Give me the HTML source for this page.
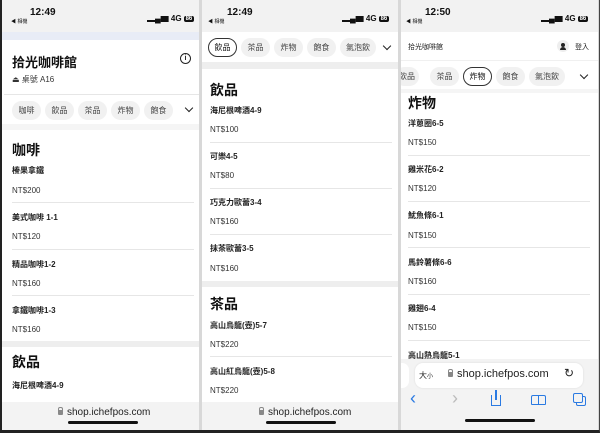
<!DOCTYPE html><html><head><meta charset="utf-8"><style>
*{margin:0;padding:0;box-sizing:border-box}
body{width:600px;height:433px;background:#d8d8d8;position:relative;overflow:hidden;font-family:"Liberation Sans","Noto Sans CJK TC",sans-serif;color:#222}
.frame{position:absolute;left:0;top:0;width:600px;height:433px;border-left:2px solid #222;border-bottom:3px solid #222;border-right:1px solid #444;pointer-events:none}
.p{position:absolute;top:0;height:430px;background:#fff;overflow:hidden}
.a{position:absolute;white-space:nowrap}
.sb{position:absolute;left:0;top:0;width:100%;height:32px;background:#f2f2f2}
.tm{position:absolute;top:7px;font-size:10px;font-weight:bold;color:#111}
.bk{position:absolute;top:18px;font-size:5px;color:#111}
.sig{position:absolute;top:13px;font-size:8px;font-weight:bold;color:#111}
.bat{display:inline-block;background:#111;color:#fff;font-size:6px;border-radius:2px;padding:0 2px;margin-left:2px;vertical-align:1px}
.h{font-size:14px;font-weight:bold;color:#111}
.n{font-size:8px;font-weight:bold;color:#222}
.pr{font-size:8px;color:#333}
.ln{position:absolute;height:1px;background:#e6e6e6}
.band{position:absolute;left:0;width:100%;background:#eeeeee}
.chip{position:absolute;height:19px;border-radius:10px;background:#f1f1f1;font-size:8px;color:#444;text-align:center;line-height:19px}
.chip.s{background:#fff;border:1px solid #333;line-height:17px;color:#111}
.bb{position:absolute;left:0;width:100%;background:#f3f3f3}
.url{position:absolute;font-size:10px;color:#222}
.lk{display:inline-block;width:5px;height:5px;background:#888;border-radius:1px;margin-right:4px;position:relative;vertical-align:0}
.lk:before{content:"";position:absolute;left:1px;top:-3px;width:3px;height:3px;border:1px solid #888;border-bottom:none;border-radius:2px 2px 0 0;box-sizing:content-box;left:0}
.hi{position:absolute;height:3px;background:#111;border-radius:2px}
.chev{position:absolute;width:6px;height:6px;border-right:1.5px solid #222;border-bottom:1.5px solid #222;transform:rotate(45deg)}
</style></head><body>
<!-- panel 1 -->
<div class="p" style="left:2px;width:197px">
<div class="sb"></div>
<div class="tm" style="left:28px">12:49</div><div class="bk" style="left:9px">◀ 相機</div>
<div class="sig" style="left:145px">▂▄▆ 4G<span class="bat">86</span></div>
<div class="a" style="left:0;top:32px;width:197px;height:8px;background:#e8ecf6"></div>
<div class="a h" style="left:10px;top:52px;font-size:13px">拾光咖啡館</div>
<div class="a" style="left:178px;top:53px;width:11px;height:11px;border:1.2px solid #222;border-radius:50%;font-size:7px;text-align:center;line-height:9px;font-weight:bold">i</div>
<div class="a" style="left:10px;top:74px;font-size:8px;color:#333">⏏ 桌號 A16</div>
<div class="ln" style="left:2px;width:195px;top:94px"></div>
<div class="chip" style="left:10px;top:101px;width:29px">咖啡</div>
<div class="chip" style="left:43px;top:101px;width:29px">飲品</div>
<div class="chip" style="left:76px;top:101px;width:29px">茶品</div>
<div class="chip" style="left:109px;top:101px;width:29px">炸物</div>
<div class="chip" style="left:142px;top:101px;width:29px">飽食</div>
<div class="chev" style="left:184px;top:105px"></div>
<div class="band" style="top:124px;height:6px;background:#f5f5f5"></div>
<div class="a h" style="left:10px;top:140px">咖啡</div>
<div class="a n" style="left:10px;top:165px">榛果拿鐵</div><div class="a pr" style="left:10px;top:186px">NT$200</div>
<div class="ln" style="left:10px;width:182px;top:202px"></div>
<div class="a n" style="left:10px;top:212px">美式咖啡 1-1</div><div class="a pr" style="left:10px;top:232px">NT$120</div>
<div class="ln" style="left:10px;width:182px;top:249px"></div>
<div class="a n" style="left:10px;top:259px">精品咖啡1-2</div><div class="a pr" style="left:10px;top:279px">NT$160</div>
<div class="ln" style="left:10px;width:182px;top:295px"></div>
<div class="a n" style="left:10px;top:305px">拿鐵咖啡1-3</div><div class="a pr" style="left:10px;top:325px">NT$160</div>
<div class="band" style="top:341px;height:6px"></div>
<div class="a h" style="left:10px;top:352px">飲品</div>
<div class="a n" style="left:10px;top:380px">海尼根啤酒4-9</div>
<div class="bb" style="top:402px;height:28px"></div>
<div class="url" style="left:56px;top:407px"><span class="lk"></span>shop.ichefpos.com</div>
<div class="hi" style="left:66px;top:421px;width:70px"></div>
</div>
<!-- panel 2 -->
<div class="p" style="left:202px;width:196px">
<div class="sb"></div>
<div class="tm" style="left:25px">12:49</div><div class="bk" style="left:6px">◀ 相機</div>
<div class="sig" style="left:140px">▂▄▆ 4G<span class="bat">86</span></div>
<div class="chip s" style="left:6px;top:38px;width:29px">飲品</div>
<div class="chip" style="left:39px;top:38px;width:29px">茶品</div>
<div class="chip" style="left:72px;top:38px;width:29px">炸物</div>
<div class="chip" style="left:105px;top:38px;width:29px">飽食</div>
<div class="chip" style="left:138px;top:38px;width:36px">氣泡飲</div>
<div class="chev" style="left:182px;top:43px"></div>
<div class="band" style="top:62px;height:7px"></div>
<div class="a h" style="left:8px;top:80px">飲品</div>
<div class="a n" style="left:8px;top:105px">海尼根啤酒4-9</div><div class="a pr" style="left:8px;top:125px">NT$100</div>
<div class="ln" style="left:8px;width:182px;top:142px"></div>
<div class="a n" style="left:8px;top:151px">可樂4-5</div><div class="a pr" style="left:8px;top:171px">NT$80</div>
<div class="ln" style="left:8px;width:182px;top:188px"></div>
<div class="a n" style="left:8px;top:197px">巧克力歐蕾3-4</div><div class="a pr" style="left:8px;top:217px">NT$160</div>
<div class="ln" style="left:8px;width:182px;top:234px"></div>
<div class="a n" style="left:8px;top:243px">抹茶歐蕾3-5</div><div class="a pr" style="left:8px;top:264px">NT$160</div>
<div class="band" style="top:281px;height:6px"></div>
<div class="a h" style="left:8px;top:294px">茶品</div>
<div class="a n" style="left:8px;top:320px">高山烏龍(壺)5-7</div><div class="a pr" style="left:8px;top:340px">NT$220</div>
<div class="ln" style="left:8px;width:182px;top:356px"></div>
<div class="a n" style="left:8px;top:366px">高山紅烏龍(壺)5-8</div><div class="a pr" style="left:8px;top:386px">NT$220</div>
<div class="bb" style="top:402px;height:28px"></div>
<div class="url" style="left:57px;top:407px"><span class="lk"></span>shop.ichefpos.com</div>
<div class="hi" style="left:64px;top:421px;width:70px"></div>
</div>
<!-- panel 3 -->
<div class="p" style="left:401px;width:197px">
<div class="sb"></div>
<div class="tm" style="left:24px">12:50</div><div class="bk" style="left:5px">◀ 相機</div>
<div class="sig" style="left:140px">▂▄▆ 4G<span class="bat">86</span></div>
<div class="a" style="left:7px;top:42px;font-size:7px;color:#222">拾光咖啡館</div>
<div class="a" style="left:156px;top:40px;width:12px;height:12px;border-radius:50%;background:#eee"></div>
<div class="a" style="left:160px;top:43px;width:4px;height:4px;border-radius:50%;background:#222"></div>
<div class="a" style="left:159px;top:47px;width:6px;height:3px;border-radius:3px 3px 0 0;background:#222"></div>
<div class="a" style="left:174px;top:42px;font-size:7px">登入</div>
<div class="ln" style="left:0;width:197px;top:60px;background:#f0f0f0"></div>
<div class="chip" style="left:-6px;top:67px;width:24px">飲品</div>
<div class="chip" style="left:29px;top:67px;width:29px">茶品</div>
<div class="chip s" style="left:62px;top:67px;width:29px">炸物</div>
<div class="chip" style="left:95px;top:67px;width:29px">飽食</div>
<div class="chip" style="left:128px;top:67px;width:36px">氣泡飲</div>
<div class="chev" style="left:180px;top:72px"></div>
<div class="band" style="top:89px;height:4px;background:#f5f5f5"></div>
<div class="a h" style="left:7px;top:93px">炸物</div>
<div class="a n" style="left:7px;top:118px">洋蔥圈6-5</div><div class="a pr" style="left:7px;top:138px">NT$150</div>
<div class="ln" style="left:7px;width:182px;top:155px"></div>
<div class="a n" style="left:7px;top:164px">雞米花6-2</div><div class="a pr" style="left:7px;top:184px">NT$120</div>
<div class="ln" style="left:7px;width:182px;top:201px"></div>
<div class="a n" style="left:7px;top:210px">魷魚條6-1</div><div class="a pr" style="left:7px;top:231px">NT$150</div>
<div class="ln" style="left:7px;width:182px;top:247px"></div>
<div class="a n" style="left:7px;top:257px">馬鈴薯條6-6</div><div class="a pr" style="left:7px;top:277px">NT$160</div>
<div class="ln" style="left:7px;width:182px;top:294px"></div>
<div class="a n" style="left:7px;top:303px">雞翅6-4</div><div class="a pr" style="left:7px;top:323px">NT$150</div>
<div class="ln" style="left:7px;width:182px;top:340px"></div>
<div class="a n" style="left:7px;top:350px">高山熱烏龍5-1</div>
<div class="bb" style="top:359px;height:71px"></div>
<div class="a" style="left:0;top:363px;width:8px;height:25px;background:#fff;border-radius:0 7px 7px 0"></div>
<div class="a" style="left:14px;top:363px;width:168px;height:25px;background:#fff;border-radius:8px;box-shadow:0 0 2px rgba(0,0,0,.1)"></div>
<div class="a" style="left:18px;top:370px;font-size:8px">大<span style="font-size:6px">小</span></div>
<div class="url" style="left:47px;top:368px;font-size:11px"><span class="lk"></span>shop.ichefpos.com</div>
<div class="a" style="left:163px;top:366px;font-size:12px">↻</div>
<div class="a" style="left:9px;top:388px;font-size:18px;color:#2a7ae2">‹</div>
<div class="a" style="left:51px;top:388px;font-size:18px;color:#bbb">›</div>
<div class="a" style="left:90px;top:395px;width:10px;height:11px;border:1.5px solid #2a7ae2;border-top:none"></div>
<div class="a" style="left:94px;top:390px;width:1.5px;height:10px;background:#2a7ae2"></div>
<div class="a" style="left:130px;top:395px;width:8px;height:10px;border:1.5px solid #2a7ae2;border-radius:2px 0 0 1px"></div>
<div class="a" style="left:137px;top:395px;width:8px;height:10px;border:1.5px solid #2a7ae2;border-radius:0 2px 1px 0"></div>
<div class="a" style="left:175px;top:396px;width:10px;height:10px;border:1.5px solid #2a7ae2;border-radius:2px"></div>
<div class="a" style="left:172px;top:393px;width:10px;height:10px;border:1.5px solid #2a7ae2;border-radius:2px;background:#f3f3f3"></div>
<div class="hi" style="left:64px;top:419px;width:70px"></div>
</div>
<div class="frame"></div>
</body></html>
